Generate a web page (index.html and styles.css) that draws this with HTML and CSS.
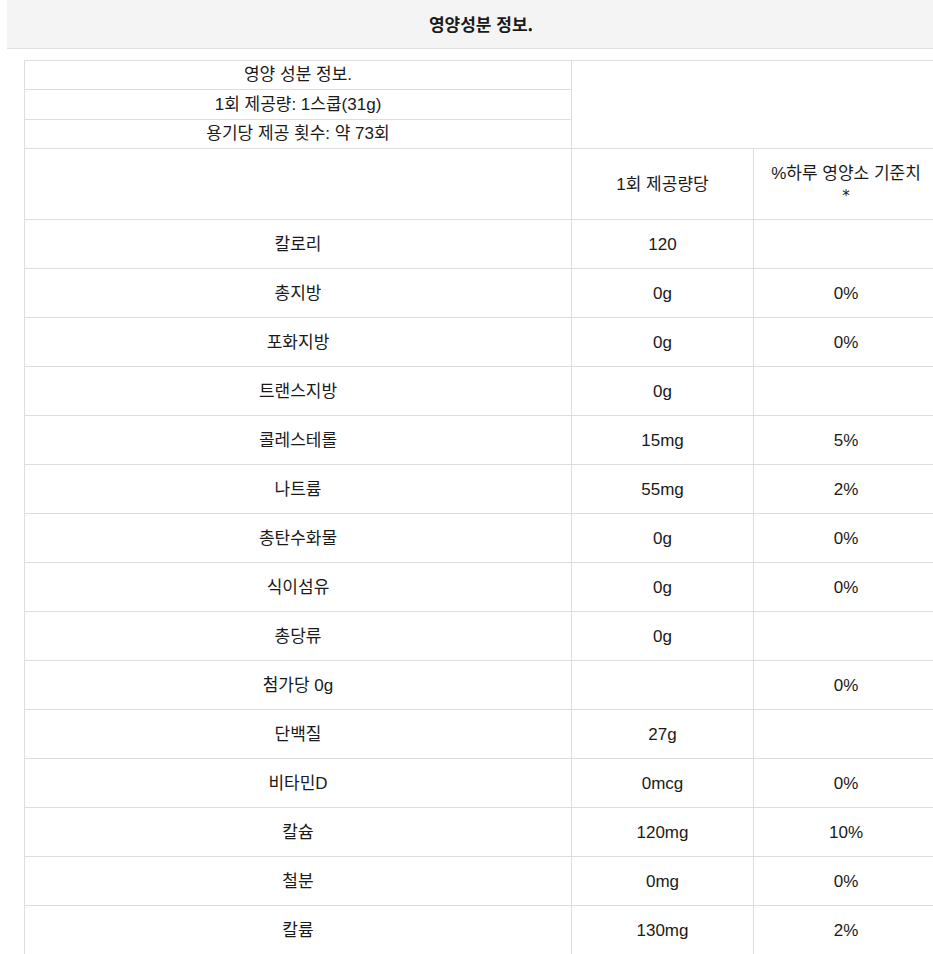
FILE: index.html
```html
<!DOCTYPE html>
<html lang="ko">
<head>
<meta charset="utf-8">
<title>영양성분 정보.</title>
<link rel="stylesheet" href="styles.css">
</head>
<body>
<div class="wrap">
  <div class="title-bar">영양성분 정보.</div>
  <div class="content">
    <table class="nutri">
      <colgroup>
        <col class="c1"><col class="c2"><col class="c3">
      </colgroup>
      <tbody>
        <tr class="info"><td>영양 성분 정보.</td><td class="blank" rowspan="3" colspan="2"></td></tr>
        <tr class="info mid"><td>1회 제공량: 1스쿱(31g)</td></tr>
        <tr class="info"><td>용기당 제공 횟수: 약 73회</td></tr>
        <tr class="head"><td></td><td>1회 제공량당</td><td>%하루 영양소 기준치<br><span class="star">*</span></td></tr>
        <tr><td>칼로리</td><td>120</td><td></td></tr>
        <tr><td>총지방</td><td>0g</td><td>0%</td></tr>
        <tr><td>포화지방</td><td>0g</td><td>0%</td></tr>
        <tr><td>트랜스지방</td><td>0g</td><td></td></tr>
        <tr><td>콜레스테롤</td><td>15mg</td><td>5%</td></tr>
        <tr><td>나트륨</td><td>55mg</td><td>2%</td></tr>
        <tr><td>총탄수화물</td><td>0g</td><td>0%</td></tr>
        <tr><td>식이섬유</td><td>0g</td><td>0%</td></tr>
        <tr><td>총당류</td><td>0g</td><td></td></tr>
        <tr><td>첨가당 0g</td><td></td><td>0%</td></tr>
        <tr><td>단백질</td><td>27g</td><td></td></tr>
        <tr><td>비타민D</td><td>0mcg</td><td>0%</td></tr>
        <tr><td>칼슘</td><td>120mg</td><td>10%</td></tr>
        <tr><td>철분</td><td>0mg</td><td>0%</td></tr>
        <tr><td>칼륨</td><td>130mg</td><td>2%</td></tr>
      </tbody>
    </table>
  </div>
</div>
</body>
</html>
```

FILE: styles.css
```css
html {
  overflow: hidden;
}
body {
  margin: 0;
  background: #fff;
  color: #1a1a1a;
  font-family: "Liberation Sans", "Noto Sans CJK KR", sans-serif;
  font-size: 17px;
}
.wrap {
  width: 948px;
  margin-left: 7px;
}
.title-bar {
  height: 48px;
  line-height: 48px;
  background: #f4f4f4;
  border-bottom: 1px solid #e0e0e0;
  text-align: center;
  font-weight: bold;
  font-family: "Noto Sans CJK KR", sans-serif;
}
.content {
  padding: 11px 17px 0;
}
.nutri {
  width: 914px;
  border-collapse: collapse;
  table-layout: fixed;
}
.c1 { width: 547px; }
.c2 { width: 182px; }
.c3 { width: 185px; }
.nutri td {
  border: 1px solid #dddddd;
  text-align: center;
  vertical-align: middle;
  line-height: 22px;
  padding: 14px 6px 12px;
}
.nutri tr.info td {
  padding: 3px 6px;
}
.nutri tr.info.mid td {
  padding: 4px 6px 3px;
}
.nutri tr.info td.blank {
  padding: 0;
}
.nutri tr.head td {
  padding: 14px 6px 12px;
}
.star {
  font-family: "DejaVu Sans", sans-serif;
  font-size: 15px;
}
```
